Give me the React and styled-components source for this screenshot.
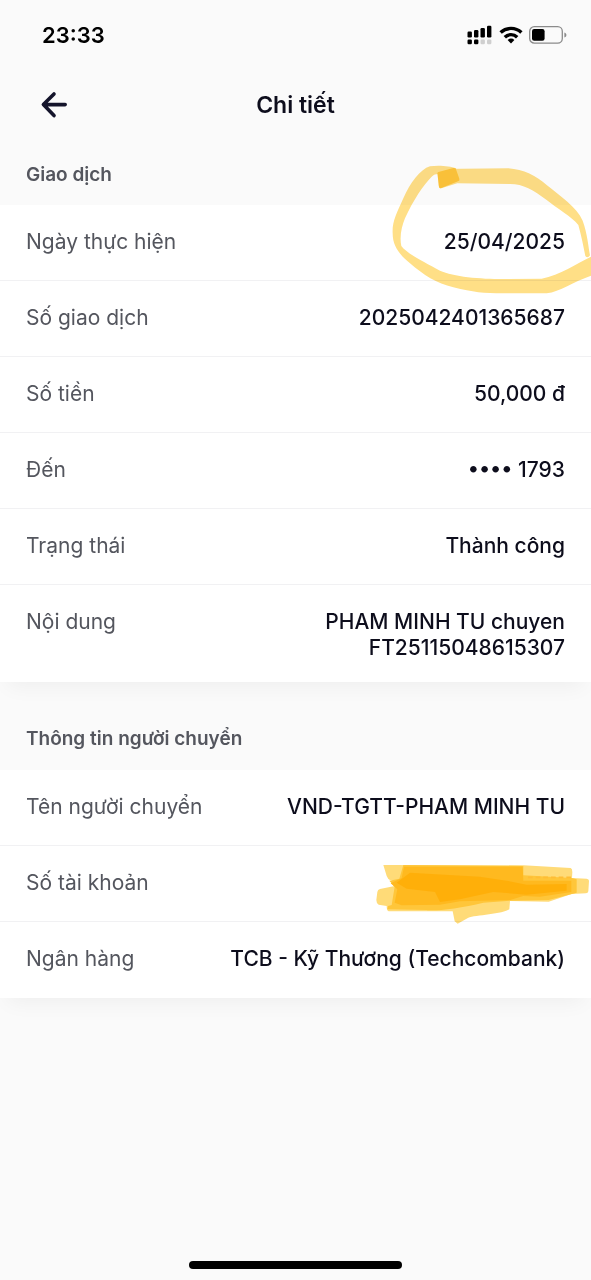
import React from "react";
import styled, { createGlobalStyle } from "styled-components";

const transaction = [
  { label: "Ngày thực hiện", value: "25/04/2025", mark: "circle" },
  { label: "Số giao dịch", value: "2025042401365687" },
  { label: "Số tiền", value: "50,000 đ" },
  { label: "Đến", value: "•••• 1793" },
  { label: "Trạng thái", value: "Thành công" },
  { label: "Nội dung", value: "PHAM MINH TU chuyen FT25115048615307" },
];

const sender = [
  { label: "Tên người chuyển", value: "VND-TGTT-PHAM MINH TU" },
  { label: "Số tài khoản", value: "", mark: "scribble" },
  { label: "Ngân hàng", value: "TCB - Kỹ Thương (Techcombank)" },
];

export default function App() {
  return (
    <Page>
      <GlobalStyle />
      <StatusBar>
        <Clock>23:33</Clock>
        <StatusIcons>
          <SignalIcon />
          <WifiIcon />
          <BatteryIcon />
        </StatusIcons>
      </StatusBar>
      <Header>
        <BackButton type="button" aria-label="Quay lại">
          <svg width="28" height="28" viewBox="0 0 28 28" fill="none" stroke="currentColor" strokeWidth="3.6" strokeLinecap="round" strokeLinejoin="round">
            <path d="M14 3 3.4 13.6 14 24.6M3.8 13.6h21.4" />
          </svg>
        </BackButton>
        <Title>Chi tiết</Title>
      </Header>
      <main>
        <DetailSection title="Giao dịch" rows={transaction} />
        <DetailSection title="Thông tin người chuyển" rows={sender} spaced />
      </main>
      <Footer>
        <HomeIndicator />
      </Footer>
    </Page>
  );
}

function DetailSection({ title, rows, spaced }) {
  return (
    <section>
      <SectionTitle $spaced={spaced}>{title}</SectionTitle>
      <Card>
        {rows.map((row) => (
          <Row key={row.label}>
            <Label>{row.label}</Label>
            <Value>{row.value}</Value>
            {row.mark === "circle" && <CircleMark />}
            {row.mark === "scribble" && <ScribbleMark />}
          </Row>
        ))}
      </Card>
    </section>
  );
}

function SignalIcon() {
  return (
    <svg width="26" height="20" viewBox="0 0 26 20">
      <rect x="0.5" y="6.5" width="4.4" height="6" rx="1.2" />
      <rect x="7" y="5" width="4.4" height="7.5" rx="1.2" />
      <rect x="13.5" y="3" width="4.4" height="9.5" rx="1.2" />
      <rect x="20" y="0.8" width="4.4" height="11.7" rx="1.2" />
      <rect x="0.5" y="14.5" width="4.4" height="4.8" rx="1.2" />
      <rect x="7" y="14.5" width="4.4" height="4.8" rx="1.2" />
      <rect x="13.5" y="14.5" width="4.4" height="4.8" rx="1.2" fill="#cfcfcf" />
      <rect x="20" y="14.5" width="4.4" height="4.8" rx="1.2" fill="#cfcfcf" />
    </svg>
  );
}

function WifiIcon() {
  return (
    <svg width="24" height="18" viewBox="0 0 24 18" fill="none" stroke="#000" strokeWidth="3.4">
      <path d="M1.6 6.6a15 15 0 0 1 20.8 0" />
      <path d="M5.8 11.2a8.8 8.8 0 0 1 12.4 0" />
      <path d="M12 17.4 8.6 14a4.8 4.8 0 0 1 6.8 0z" fill="#000" stroke="none" />
    </svg>
  );
}

function BatteryIcon() {
  return (
    <svg width="38" height="18" viewBox="0 0 38 18">
      <rect x="0.7" y="0.7" width="32.6" height="16.4" rx="4.6" fill="none" stroke="#8b8b8b" strokeWidth="1.3" />
      <rect x="3" y="3" width="12.6" height="11.8" rx="2.2" />
      <path d="M35.4 6.4c1.6.6 2 1.6 2 2.6s-.4 2-2 2.6z" fill="#8b8b8b" />
    </svg>
  );
}

// highlighter ring round the date
function CircleMark() {
  return (
    <Ring viewBox="0 0 663 480" aria-hidden="true">
      <g fill="#ffdf86">
        <path d="M258 55C240 48 205 45 180 49C150 58 120 100 100 145C80 190 66 215 68 250C68 290 90 315 120 340C160 375 200 400 250 412C310 427 340 430 400 430L530 430C570 425 610 395 663 377L663 320C620 340 570 375 515 386L400 387C330 387 250 380 210 362C160 335 110 310 94 288C88 260 95 230 105 205C130 150 160 105 185 80C190 74 198 72 205 72L268 92Z" />
        <path d="M205 57L415 55C460 58 500 78 530 105C570 138 620 170 638 212C652 250 655 290 660 316Q653 326 646 318C640 290 635 260 625 225C605 200 560 175 530 150C490 120 460 102 420 102L262 100L214 115Q206 115 206 104Z" />
      </g>
      <path d="M202 70Q202 66 208 65L250 54Q256 53 258 58L268 86Q270 92 264 94L214 114Q208 116 207 110Z" fill="#fec43a" />
    </Ring>
  );
}

// highlighter strokes covering the account number
function ScribbleMark() {
  return (
    <Scribble viewBox="0 0 693 240" aria-hidden="true">
      <path d="M70 45 490 46 632 54Q637 56 637 66L636 84 680 86Q687 87 687 92L685 124Q684 130 678 130L635 132 566 155 450 153 448 178C430 192 345 196 325 203L293 221 284 214 278 184 86 184Q80 182 80 168L56 164Q49 160 49 150L52 126Q53 119 60 117L104 108 108 92 90 90Q84 88 80 78Z" fill="#ffdb78" />
      <path d="M130 45 490 48 490 76 635 84 650 88 650 128 566 150 450 152 370 158C300 176 220 184 200 180L82 178 84 168 95 165 104 110 88 92 118 86Z" fill="#ffc63a" />
      <path d="M132 50 488 50 490 92 634 92 634 126 540 140 490 138 450 150 300 154 240 164 125 166 104 158 112 118 92 100 125 84Z" fill="#ffb91f" />
      <path d="M150 68 360 80 440 92 500 104 620 102 620 122 500 134 400 126 300 148 240 156 225 126 140 116 110 98Z" fill="#ffab00" opacity="0.7" />
      <path d="M504 82h130" stroke="#ffbd35" strokeWidth="5" strokeDasharray="14 9" fill="none" />
    </Scribble>
  );
}

const GlobalStyle = createGlobalStyle`
  * {
    box-sizing: border-box;
  }
  body {
    margin: 0;
    background: #fafafa;
    font-family: Inter, "Liberation Sans", sans-serif;
    color: #0d0d1c;
  }
`;

const Page = styled.div`
  display: flex;
  flex-direction: column;
  min-height: 100vh;
  overflow-x: hidden;
`;

const StatusBar = styled.div`
  display: flex;
  justify-content: space-between;
  align-items: center;
  height: 70px;
  padding: 0 24px 0 42px;
`;

const Clock = styled.time`
  font-size: 22px;
  font-weight: 600;
  color: #000;
`;

const StatusIcons = styled.div`
  display: flex;
  align-items: center;
  gap: 6px;
`;

const Header = styled.header`
  display: grid;
  grid-template-columns: 1fr auto 1fr;
  align-items: center;
  height: 70px;
  padding: 0 40px;
`;

const BackButton = styled.button`
  display: flex;
  justify-self: start;
  padding: 0;
  border: 0;
  background: none;
  color: #14142b;
  cursor: pointer;
`;

const Title = styled.h1`
  margin: 0;
  font-size: 23px;
  font-weight: 600;
`;

const SectionTitle = styled.h2`
  margin: 0;
  padding: ${(props) => (props.$spaced ? "45px 26px 19px" : "23px 26px 18px")};
  font-size: 19px;
  font-weight: 600;
  line-height: 24px;
  color: #54565e;
`;

const Card = styled.dl`
  margin: 0;
  background: #fff;
  box-shadow: 0 12px 20px -8px rgba(0, 0, 0, 0.05);
`;

const Row = styled.div`
  position: relative;
  display: flex;
  justify-content: space-between;
  gap: 24px;
  min-height: 76px;
  padding: 24px 26px 21px;
  border-bottom: 1px solid #f1f1f3;
  &:last-child {
    border-bottom: 0;
  }
`;

const Label = styled.dt`
  flex-shrink: 0;
  font-size: 21px;
  line-height: 26px;
  color: #54565e;
`;

const Value = styled.dd`
  max-width: 360px;
  margin: 0;
  font-size: 21px;
  font-weight: 500;
  line-height: 26px;
  text-align: right;
`;

const Mark = styled.svg`
  position: absolute;
  right: 0;
  pointer-events: none;
  mix-blend-mode: multiply;
`;

const Ring = styled(Mark)`
  top: -55px;
  width: 221px;
  height: 160px;
  z-index: 1;
`;

const Scribble = styled(Mark)`
  top: 4px;
  width: 231px;
  height: 80px;
`;

const Footer = styled.footer`
  display: flex;
  justify-content: center;
  margin-top: auto;
  padding-bottom: 11px;
`;

const HomeIndicator = styled.div`
  width: 36%;
  height: 8px;
  border-radius: 4px;
  background: #000;
`;
